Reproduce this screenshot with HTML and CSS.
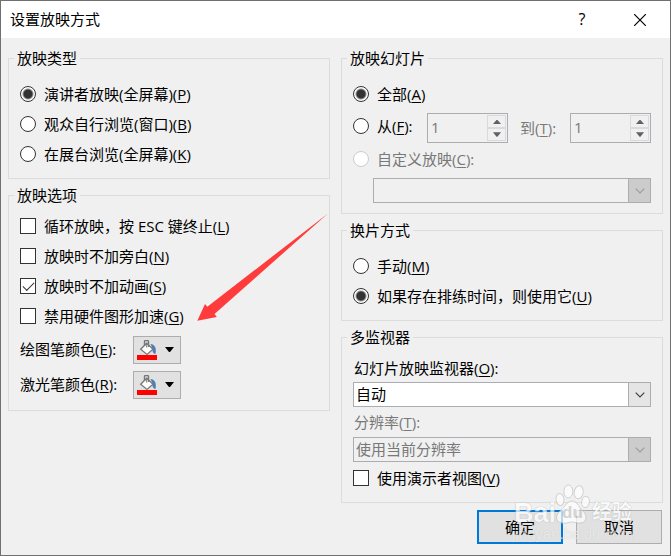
FILE: index.html
```html
<!DOCTYPE html>
<html lang="zh-CN">
<head>
<meta charset="utf-8">
<title>设置放映方式</title>
<link rel="stylesheet" href="styles.css">
</head>
<body>
<svg class="defs" aria-hidden="true">
  <symbol id="bucket" viewBox="0 0 20 20">
    <path d="M13.500 4c4 .5 6.300 3.500 5 10-2.800-.5-3.300-3-2.800-5z" fill="#4a7ebb"/>
    <path d="M9.700 3.200l6.300 6-6 5.300-6.300-5.300z" fill="#fff" stroke="#777" stroke-width="1.300"/>
    <path d="M7.500 6V1.500q0-.9.900-.9h2.200q.9 0 .9.900V7" fill="none" stroke="#777" stroke-width="1.400"/>
    <path d="M9.700 3v4.500" stroke="#777" stroke-width="1"/>
    <path d="M0 15h20v5H0z" fill="#f00"/>
  </symbol>
  <symbol id="chevron" viewBox="0 0 10 6">
    <path d="M.7.700L5 5 9.300.700" fill="none" stroke="currentColor" stroke-width="1.200"/>
  </symbol>
  <symbol id="up" viewBox="0 0 8 5"><path d="M0 5l3.500-4h1L8 5z" fill="currentColor"/></symbol>
  <symbol id="down" viewBox="0 0 9 5"><path d="M0 0h9L5 5H4z" fill="currentColor"/></symbol>
</svg>
<main class="dialog">
  <header class="titlebar">
    <h1>设置放映方式</h1>
    <button class="caption" type="button" aria-label="帮助">?</button>
    <button class="caption" type="button" aria-label="关闭"><svg width="12" height="12" viewBox="0 0 12 12"><path d="M0 0l12 12M12 0L0 12" stroke="#000" stroke-width="1.200"/></svg></button>
  </header>
  <form class="content">
    <div class="columns">
      <div class="column">
        <fieldset class="roomy">
          <legend>放映类型</legend>
          <label class="option"><input type="radio" name="type" checked><span>演讲者放映(全屏幕)(<u>P</u>)</span></label>
          <label class="option"><input type="radio" name="type"><span>观众自行浏览(窗口)(<u>B</u>)</span></label>
          <label class="option"><input type="radio" name="type"><span>在展台浏览(全屏幕)(<u>K</u>)</span></label>
        </fieldset>
        <fieldset class="compact">
          <legend>放映选项</legend>
          <label class="option"><input type="checkbox"><span>循环放映，按 ESC 键终止(<u>L</u>)</span></label>
          <label class="option"><input type="checkbox"><span>放映时不加旁白(<u>N</u>)</span></label>
          <label class="option"><input type="checkbox" checked><span>放映时不加动画(<u>S</u>)</span></label>
          <label class="option"><input type="checkbox"><span>禁用硬件图形加速(<u>G</u>)</span></label>
          <div class="colors">
            <label for="pen">绘图笔颜色(<u>E</u>):</label>
            <button class="swatch" id="pen" type="button"><svg width="20" height="20"><use href="#bucket"/></svg><svg width="9" height="5"><use href="#down"/></svg></button>
            <label for="laser">激光笔颜色(<u>R</u>):</label>
            <button class="swatch" id="laser" type="button"><svg width="20" height="20"><use href="#bucket"/></svg><svg width="9" height="5"><use href="#down"/></svg></button>
          </div>
        </fieldset>
      </div>
      <div class="column">
        <fieldset class="roomy">
          <legend>放映幻灯片</legend>
          <label class="option"><input type="radio" name="slides" checked><span>全部(<u>A</u>)</span></label>
          <div class="range">
            <label class="option from"><input type="radio" name="slides"><span>从(<u>F</u>):</span></label>
            <div class="spinner">
              <input type="text" value="1" aria-label="起始幻灯片" disabled>
              <div class="steps">
                <button type="button" aria-label="增加" disabled><svg width="8" height="5"><use href="#up"/></svg></button>
                <button type="button" aria-label="减少" disabled><svg width="8" height="5"><use href="#down"/></svg></button>
              </div>
            </div>
            <label class="to muted" for="last">到(<u>T</u>):</label>
            <div class="spinner">
              <input type="text" id="last" value="1" disabled>
              <div class="steps">
                <button type="button" aria-label="增加" disabled><svg width="8" height="5"><use href="#up"/></svg></button>
                <button type="button" aria-label="减少" disabled><svg width="8" height="5"><use href="#down"/></svg></button>
              </div>
            </div>
          </div>
          <label class="option muted"><input type="radio" name="slides" disabled><span>自定义放映(<u>C</u>):</span></label>
          <div class="combo disabled indent">
            <select aria-label="自定义放映" disabled><option></option></select>
            <span class="arrow"><svg width="10" height="6"><use href="#chevron"/></svg></span>
          </div>
        </fieldset>
        <fieldset class="roomy">
          <legend>换片方式</legend>
          <label class="option"><input type="radio" name="advance"><span>手动(<u>M</u>)</span></label>
          <label class="option"><input type="radio" name="advance" checked><span>如果存在排练时间，则使用它(<u>U</u>)</span></label>
        </fieldset>
        <fieldset class="roomy">
          <legend>多监视器</legend>
          <label class="caption-label first" for="monitor">幻灯片放映监视器(<u>O</u>):</label>
          <div class="combo">
            <select id="monitor"><option>自动</option></select>
            <span class="arrow"><svg width="10" height="6"><use href="#chevron"/></svg></span>
          </div>
          <label class="caption-label muted" for="resolution">分辨率(<u>T</u>):</label>
          <div class="combo disabled">
            <select id="resolution" disabled><option>使用当前分辨率</option></select>
            <span class="arrow"><svg width="10" height="6"><use href="#chevron"/></svg></span>
          </div>
          <label class="option"><input type="checkbox"><span>使用演示者视图(<u>V</u>)</span></label>
        </fieldset>
      </div>
    </div>
    <footer class="actions">
      <button class="push primary" type="button">确定</button>
      <button class="push" type="button">取消</button>
    </footer>
  </form>
  <svg class="pointer" width="132" height="108" viewBox="0 0 132 108" aria-hidden="true">
    <path d="M.3 107.700L8 91l2.300 2.700L130.700.700 17.500 101l2.300 3z" fill="#ff3b3b"/>
  </svg>
  <div class="watermark" aria-hidden="true">
    <svg class="paw" width="36" height="42" viewBox="0 0 36 42">
      <g fill="#fff" stroke="#c4c4c4" stroke-width="1">
        <ellipse cx="6" cy="15.500" rx="4" ry="6" transform="rotate(-8 6 15.500)"/>
        <ellipse cx="14.300" cy="7.500" rx="4.500" ry="6.500"/>
        <ellipse cx="24.700" cy="8.200" rx="4.500" ry="6.500" transform="rotate(10 24.700 8.200)"/>
        <ellipse cx="31.500" cy="18" rx="3.800" ry="5.500" transform="rotate(10 31.500 18)"/>
        <path d="M18 17c5 0 6 5 10 9 5 4 6 12-1 13-4 .5-6-1-9-1s-6 2-10 1c-8-1-6-9-1-13 4-3 6-9 11-9z"/>
      </g>
    </svg>
    <span class="wm-bai">Bai</span>
    <span class="wm-du">du</span>
    <span class="wm-cn">经验</span>
    <span class="wm-url">jingyan.baidu.com</span>
  </div>
</main>
</body>
</html>
```

FILE: styles.css
```css
* { box-sizing: border-box; }

body {
  margin: 0;
  background: #f0f0f0;
  color: #000;
  font: 15px/21px "Open Sans", "Noto Sans CJK SC", sans-serif;
}

button, input, select { font: inherit; color: inherit; margin: 0; }
svg { display: block; }
u { text-underline-offset: 2px; text-decoration-thickness: 1px; }
.defs { position: absolute; width: 0; height: 0; }

.dialog {
  position: relative;
  min-height: 100vh;
  border: 1px solid #707070;
  background: #f0f0f0;
}

.titlebar {
  display: flex;
  height: 37px;
  align-items: center;
  padding-left: 9px;
  background: #fff;
}
.titlebar h1 { flex: 1; margin: 0; font-size: 15px; font-weight: 400; }
.caption {
  display: grid;
  place-items: center;
  width: 58px;
  height: 37px;
  padding: 0 2px 0 0;
  border: 0;
  background: none;
  font-size: 16px;
}

.content { padding: 10px 7px 11px; }
.columns { display: grid; grid-template-columns: 1fr 1fr; gap: 11px; }
.column { display: flex; flex-direction: column; gap: 6px; min-width: 0; }

fieldset {
  min-width: 0;
  margin: 0;
  padding: 10px 11px 9px;
  border: 1px solid #dcdcdc;
}
fieldset.compact { padding: 5px 11px 8px; }
legend { margin-left: -6px; padding: 0 3px; }

.option { display: flex; align-items: center; gap: 8px; height: 30px; white-space: nowrap; }
.option input {
  appearance: none;
  flex: none;
  width: 16px;
  height: 16px;
  border: 1px solid #333;
  background: #fff;
}
.option input[type="radio"] { border-radius: 50%; }
.option input[type="radio"]:checked { background: radial-gradient(circle, #333 4px, #fff 6px); }
.option input:disabled { border-color: #ccc; }
.option input[type="checkbox"]:checked { display: grid; place-items: center; }
.option input[type="checkbox"]:checked::before {
  content: "";
  width: 10px;
  height: 5px;
  margin-bottom: 3px;
  border: solid #333;
  border-width: 0 0 1px 1px;
  transform: rotate(-45deg);
}
.muted { color: #787878; }

.colors {
  display: grid;
  grid-template-columns: 113px 48px;
  grid-auto-rows: 35px;
  align-items: center;
  margin-top: 1px;
}
.swatch {
  display: flex;
  align-items: center;
  gap: 8px;
  width: 48px;
  height: 28px;
  padding: 0 3px;
  border: 1px solid #adadad;
  background: #e1e1e1;
}

.range { display: flex; align-items: flex-end; height: 34px; margin-bottom: 1px; }
.from { flex: 1; height: 34px; }
.to { width: 50px; margin-left: 12px; line-height: 30px; }
.spinner {
  display: flex;
  width: 81px;
  height: 30px;
  padding: 1px;
  border: 1px solid #abadb3;
  color: #787878;
}
.spinner input { flex: 1; min-width: 0; padding: 0 2px 2px; border: 0; background: none; }
.steps { display: grid; grid-template-rows: 1fr 1fr; width: 19px; }
.steps button {
  display: grid;
  place-items: center;
  padding: 0;
  border: 1px solid #dadada;
  background: #f0f0f0;
  color: #606060;
}

.combo { position: relative; height: 25px; }
.combo select {
  appearance: none;
  display: block;
  width: 100%;
  height: 25px;
  padding: 0 24px 0 2px;
  border: 1px solid #abadb3;
  border-radius: 0;
  background: #fff;
  opacity: 1;
}
.combo .arrow {
  position: absolute;
  top: 0;
  right: 0;
  bottom: 0;
  display: grid;
  place-items: center;
  width: 23px;
  border: 1px solid #adadad;
  background: #e5e5e5;
  color: #404040;
  pointer-events: none;
}
.combo.disabled select { background: #f0f0f0; color: #787878; }
.combo.disabled .arrow { background: #ccc; color: #9c9c9c; }
.indent { margin: 4px 0 1px 20px; }
.caption-label { display: block; line-height: 30px; padding-left: 1px; }
.caption-label.first { line-height: 20px; padding-bottom: 4px; }

.caption-label + .combo + .option { margin-top: 1px; }

.actions { display: flex; justify-content: flex-end; gap: 13px; padding: 7px 1px 0 0; }
.push { width: 86px; height: 34px; padding: 0; border: 1px solid #adadad; background: #e1e1e1; }
.push.primary { border: 2px solid #0078d7; }

.pointer { position: absolute; left: 196px; top: 212px; }

.watermark {
  position: absolute;
  right: 35px;
  bottom: 11px;
  width: 124px;
  height: 60px;
  color: #fff;
  opacity: .7;
  pointer-events: none;
  text-shadow: 0 0 1px #888;
}
.watermark span { position: absolute; white-space: nowrap; }
.paw { position: absolute; left: 43px; top: 0; }
.watermark .wm-bai { left: 3px; top: 15px; font: bold 27px/28px "Liberation Sans", sans-serif; }
.watermark .wm-du { left: 51px; top: 19px; font: bold 17px/20px "Liberation Sans", sans-serif; color: #c8c8c8; text-shadow: none; }
.watermark .wm-cn { left: 81px; top: 16px; font: bold 20px/22px "Noto Sans CJK SC", sans-serif; }
.watermark .wm-url { left: 1px; top: 41px; font: 15px/18px "Liberation Sans", sans-serif; color: rgba(255, 255, 255, .7); text-shadow: 0 0 1px #bbb; }
```
